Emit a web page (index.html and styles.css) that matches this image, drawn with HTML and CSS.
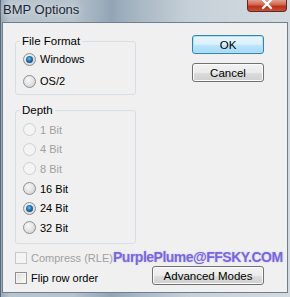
FILE: index.html
```html
<!DOCTYPE html>
<html lang="en">
<head>
  <meta charset="UTF-8">
  <title>BMP Options</title>
  <link rel="stylesheet" href="styles.css">
</head>
<body>
  <div class="window">
    <div class="titlebar">
      <span class="title">BMP Options</span>
      <span class="close">
        <svg width="14" height="10" viewBox="0 0 14 10"><path d="M3 0 L11 8 M11 0 L3 8" stroke="#fff" stroke-width="2.4" stroke-linecap="round"/></svg>
      </span>
    </div>
    <div class="client">
      <div class="left">
        <fieldset class="group format">
          <legend>File Format</legend>
          <div class="row"><span class="radio checked"></span>Windows</div>
          <div class="row"><span class="radio"></span>OS/2</div>
        </fieldset>
        <fieldset class="group depth">
          <legend>Depth</legend>
          <div class="row off"><span class="radio"></span>1 Bit</div>
          <div class="row off"><span class="radio"></span>4 Bit</div>
          <div class="row off"><span class="radio"></span>8 Bit</div>
          <div class="row"><span class="radio"></span>16 Bit</div>
          <div class="row"><span class="radio checked"></span>24 Bit</div>
          <div class="row"><span class="radio"></span>32 Bit</div>
        </fieldset>
        <div class="checks">
          <div class="row off"><span class="check"></span>Compress (RLE)</div>
          <div class="row"><span class="check"></span>Flip row order</div>
        </div>
      </div>
      <div class="right">
        <button class="btn default">OK</button>
        <button class="btn">Cancel</button>
        <button class="btn wide">Advanced Modes</button>
      </div>
      <div class="watermark">PurplePlume@FFSKY.COM</div>
    </div>
  </div>
</body>
</html>
```
FILE: styles.css
```css
body {
  margin: 0;
  font-family: 'Liberation Sans', Arial, sans-serif;
  font-size: 11px;
  color: #000;
}
.window {
  width: 290px;
  height: 297px;
  display: flex;
  flex-direction: column;
  background: linear-gradient(90deg, #9aa9b6 0, #b8c4ce 3%, #b6c2cc 25%, #93a5b5 38%, #a9b8c4 48%, #c6d0d8 65%, #d3dbe1 100%);
  box-sizing: border-box;
  border-left: 1px solid #56687a;
}
.titlebar {
  height: 22px;
  display: flex;
  align-items: flex-start;
  justify-content: space-between;
}
.title {
  font-size: 13px;
  color: #1c2734;
  margin: 2px 0 0 2px;
  text-shadow: 0 0 6px rgba(255, 255, 255, 0.8);
}
.close {
  width: 40px;
  height: 12px;
  margin-right: 3px;
  box-sizing: border-box;
  border: 1px solid #5b2a22;
  border-top: none;
  border-radius: 0 0 4px 4px;
  background: linear-gradient(#e0a090 0, #d26a52 40%, #b8301a 60%, #c8503a 100%);
  display: flex;
  justify-content: center;
}
.client {
  position: relative;
  flex: 1;
  margin: 0 2px 4px 1px;
  border: 1px solid #6f7f8e;
  background: #f0f0f0;
  display: flex;
  padding: 11px 23px 4px 12px;
}
.left {
  width: 121px;
  display: flex;
  flex-direction: column;
}
.group {
  margin: 0;
  border: 1px solid #d5dfe5;
  border-radius: 3px;
  padding: 0 0 2px 7px;
}
.group legend {
  padding: 0 2px;
  margin-left: -3px;
  line-height: 14px;
  font-size: 11.5px;
}
.format .row {
  height: 22px;
}
.depth {
  margin-top: 8px;
  padding-top: 3px;
  padding-bottom: 5px;
}
.depth .row {
  height: 19.6px;
}
.checks {
  margin-top: 5px;
}
.checks .row {
  height: 19.5px;
}
.row {
  display: flex;
  align-items: center;
  gap: 4px;
  font-size: 11px;
}
.row.off {
  color: #a0a0a0;
}
.radio {
  width: 13px;
  height: 13px;
  box-sizing: border-box;
  border-radius: 50%;
  border: 1px solid #8c8f92;
  background: radial-gradient(circle at 40% 35%, #f8f8f8 0, #e6e6e6 45%, #c9c9c9 100%);
  display: flex;
  align-items: center;
  justify-content: center;
  flex-shrink: 0;
}
.radio.checked::after {
  content: '';
  width: 7px;
  height: 7px;
  border-radius: 50%;
  background: radial-gradient(circle at 45% 40%, #6ec2ee 0, #1b6fae 45%, #0d355e 100%);
}
.off .radio {
  border-color: #cdd0d2;
  background: #f4f4f4;
}
.check {
  width: 12px;
  height: 12px;
  box-sizing: border-box;
  border: 1px solid #8e8f8f;
  background: linear-gradient(135deg, #dcdcdc 0, #f2f2f2 70%, #fdfdfd 100%);
  box-shadow: inset 0 0 0 1px #f4f4f4;
  flex-shrink: 0;
}
.off .check {
  border-color: #c6c8ca;
  background: #f4f4f4;
}
.right {
  flex: 1;
  margin-left: 15px;
  display: flex;
  flex-direction: column;
  align-items: flex-end;
}
.btn {
  width: 72px;
  height: 19px;
  padding: 0;
  font-family: 'Liberation Sans', Arial, sans-serif;
  font-size: 11.5px;
  color: #000;
  border: 1px solid #707070;
  border-radius: 3px;
  background: linear-gradient(#f2f2f2 0, #ebebeb 50%, #dddddd 51%, #cfcfcf 100%);
  box-shadow: inset 0 0 0 1px #fbfbfb;
}
.btn.default {
  margin-top: 1px;
  border-color: #3c7fb1;
  background: linear-gradient(#eaf6fd 0, #d9f0fc 50%, #bee6fd 51%, #a7d9f5 100%);
  box-shadow: inset 0 0 0 1px #a9e4fb;
}
.btn + .btn {
  margin-top: 9px;
}
.btn.wide {
  width: 112px;
  margin-top: auto;
  margin-bottom: 3px;
}
.watermark {
  position: absolute;
  left: 110px;
  top: 226px;
  font-size: 14px;
  font-weight: bold;
  letter-spacing: -0.5px;
  color: #7868dc;
  text-shadow: 0 0 2px #c9c0f4;
}
```
